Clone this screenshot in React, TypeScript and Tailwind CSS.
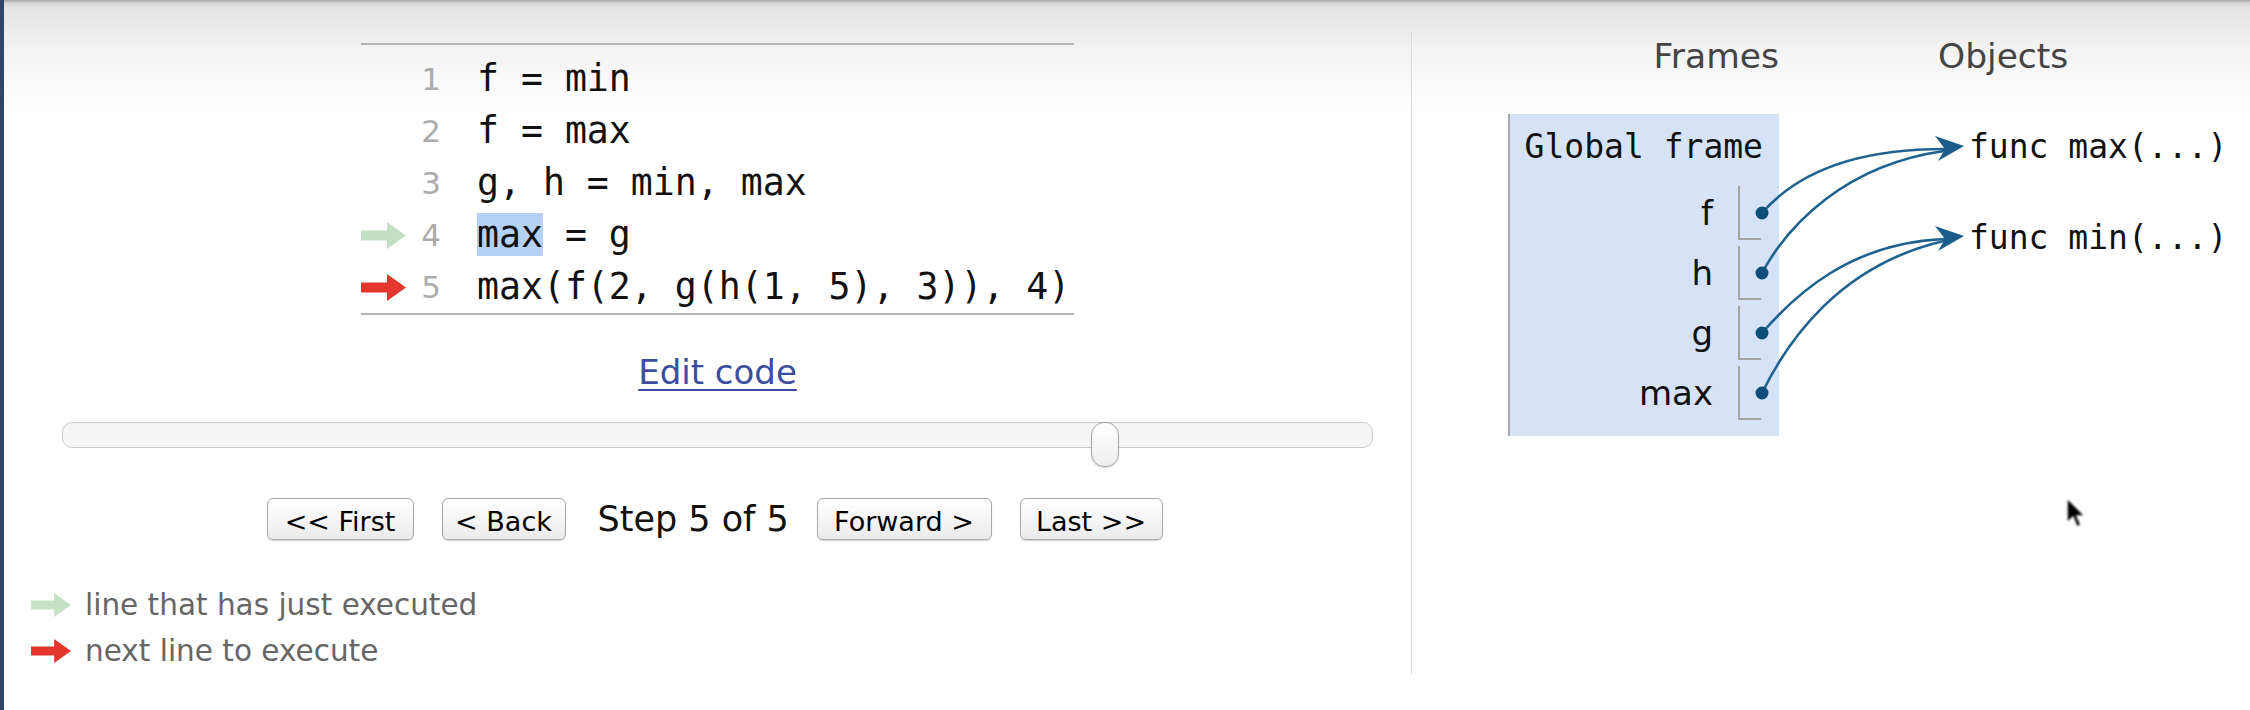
import React from "react";

const mono = "font-['DejaVu_Sans_Mono',monospace]";
const sans = "font-['DejaVu_Sans',sans-serif]";

const codeLines = [
  { n: 1, text: "f = min" },
  { n: 2, text: "f = max" },
  { n: 3, text: "g, h = min, max" },
  { n: 4, text: "max = g", arrow: "green" },
  { n: 5, text: "max(f(2, g(h(1, 5), 3)), 4)", arrow: "red" },
];

const frameVars = ["f", "h", "g", "max"];

function LineArrow({ color, className }: { color: string; className?: string }) {
  return (
    <svg viewBox="0 0 45 27" className={className}>
      <path d="M0 8.5H26V0L45 13.5L26 27V18.5H0Z" fill={color} />
    </svg>
  );
}

function NavButton({ label, width }: { label: string; width: string }) {
  return (
    <button
      className={`${width} h-[42px] rounded-[6px] border-[1.5px] border-[#a9a9a9] bg-linear-to-b from-white to-[#ebebeb] shadow-[0_1px_1px_rgba(0,0,0,0.18)] text-[27px] leading-none text-black pt-[4px] whitespace-nowrap ${sans}`}
    >
      {label}
    </button>
  );
}

export default function App() {
  return (
    <div className="relative w-[2250px] h-[710px] overflow-hidden bg-white">
      <div className="flex h-full border-l-4 border-[#2c4767] bg-[linear-gradient(to_bottom,#a6a6a6_0px,#d4d4d4_3px,#e4e4e4_8px,#f3f3f3_50px,#ffffff_110px)]">
        {/* left: code + controls */}
        <div className="w-[1407px] shrink-0 pl-[58px] pr-[38px] pt-[43px]">
          <div className="w-[713px] mx-auto border-y-2 border-[#b4b4b4] pt-[8px]">
            {codeLines.map((line) => (
              <div key={line.n} className="flex items-center h-[52px]">
                <div className="w-[50px] flex items-center">
                  {line.arrow === "green" && <LineArrow color="#c3dfc3" className="w-[45px] h-[27px]" />}
                  {line.arrow === "red" && <LineArrow color="#e3362c" className="w-[45px] h-[27px]" />}
                </div>
                <div className={`w-[30px] text-right text-[31px] leading-[52px] text-[#acacac] ${sans}`}>{line.n}</div>
                <div className={`pl-[36px] text-[36.5px] leading-[52px] text-[#111] whitespace-pre ${mono}`}>
                  {line.n === 4 ? (
                    <>
                      <span className="bg-[#b5d2f6]">max</span> = g
                    </>
                  ) : (
                    line.text
                  )}
                </div>
              </div>
            ))}
          </div>

          <div className={`mt-[37px] h-[40px] text-center text-[34px] leading-[40px] ${sans}`}>
            <a href="#" className="text-[#3a4e9c] underline decoration-2 underline-offset-[5px]">
              Edit code
            </a>
          </div>

          <div className="relative mt-[30px] h-[45px]">
            <div className="mt-[9px] h-[26px] rounded-[10px] border-[1.5px] border-[#cbcbcb] bg-[#f5f5f5]" />
            <div className="absolute left-[1029px] top-0 w-[28px] h-[45px] rounded-[13px] border-[1.5px] border-[#a4a4a4] bg-linear-to-b from-white to-[#eeeeee] shadow-[0_1px_1px_rgba(0,0,0,0.15)]" />
          </div>

          <div className="mt-[31px] h-[42px] flex items-center justify-center gap-[28px] pr-[6px]">
            <NavButton label="<< First" width="w-[147px]" />
            <NavButton label="< Back" width="w-[124px]" />
            <div className={`w-[195px] pl-[4px] text-[35px] leading-[42px] text-[#111] whitespace-nowrap ${sans}`}>
              Step 5 of 5
            </div>
            <NavButton label="Forward >" width="w-[175px]" />
            <NavButton label="Last >>" width="w-[143px]" />
          </div>

          <div className={`mt-[42px] -ml-[33px] text-[29.5px] text-[#666] ${sans}`}>
            <div className="flex items-center h-[46px] gap-[12px]">
              <LineArrow color="#c6e1c6" className="w-[44px] h-[24px]" />
              <span>line that has just executed</span>
            </div>
            <div className="flex items-center h-[46px] gap-[12px]">
              <LineArrow color="#e3362c" className="w-[44px] h-[24px]" />
              <span>next line to execute</span>
            </div>
          </div>
        </div>

        {/* divider */}
        <div className="w-px shrink-0 mt-[32px] h-[642px] bg-[#dadada]" />

        {/* right: frames & objects */}
        <div className="flex-1 pl-[96px] pt-[36px]">
          <div className={`flex h-[40px] text-[34.5px] leading-[40px] text-[#444] ${sans}`}>
            <div className="w-[271px] text-right">Frames</div>
            <div className="ml-[159px]">Objects</div>
          </div>

          <div className="mt-[38px] flex items-start">
            <div className="w-[271px] h-[322px] bg-[#d6e3f6] border-l-2 border-[#a9a9a9] pt-[13px]">
              <div className={`text-right pr-[16px] text-[33px] leading-[40px] text-[#111] ${mono}`}>Global frame</div>
              <div className="mt-[19px]">
                {frameVars.map((v) => (
                  <div key={v} className="flex justify-end h-[54px] mb-[6px] pr-[18px]">
                    <div className={`pr-[25px] text-[34px] leading-[54px] text-[#111] ${sans}`}>{v}</div>
                    <div className="w-[23px] border-l-2 border-b-2 border-[#a3a3a3]" />
                  </div>
                ))}
              </div>
            </div>
            <div className={`ml-[190px] text-[33px] text-[#111] ${mono}`}>
              <div className="mt-[13px] leading-[40px] whitespace-pre">func max(...)</div>
              <div className="mt-[51px] leading-[40px] whitespace-pre">func min(...)</div>
            </div>
          </div>
        </div>
      </div>

      {/* pointer arrows */}
      <svg className="absolute left-0 top-0 w-[2250px] h-[710px] pointer-events-none" viewBox="0 0 2250 710">
        <g fill="none" stroke="#1f6290" strokeWidth="2.6" strokeLinecap="round">
          <path d="M1762 213C1795 175 1850 149 1944 149" />
          <path d="M1762 273C1788 225 1845 165 1944 151" />
          <path d="M1762 333C1795 295 1850 243 1944 239" />
          <path d="M1762 393C1788 340 1840 265 1944 241" />
        </g>
        <g fill="#1b5d8b">
          <path d="M1964 146L1935 136L1945 149L1938 161Z" />
          <path d="M1964 236L1935 226L1945 239L1938 251Z" />
        </g>
        <g fill="#0e4e7a">
          <circle cx="1762" cy="213" r="6.5" />
          <circle cx="1762" cy="273" r="6.5" />
          <circle cx="1762" cy="333" r="6.5" />
          <circle cx="1762" cy="393" r="6.5" />
        </g>
      </svg>

      {/* mouse cursor */}
      <svg className="absolute left-[2064px] top-[496px] w-[26px] h-[36px] blur-[1px]" viewBox="0 0 26 36">
        <path d="M3 2L3 27L9 21L13 31L17 29L13 20L21 20Z" fill="#000" stroke="#fff" strokeWidth="1.5" />
      </svg>
    </div>
  );
}
